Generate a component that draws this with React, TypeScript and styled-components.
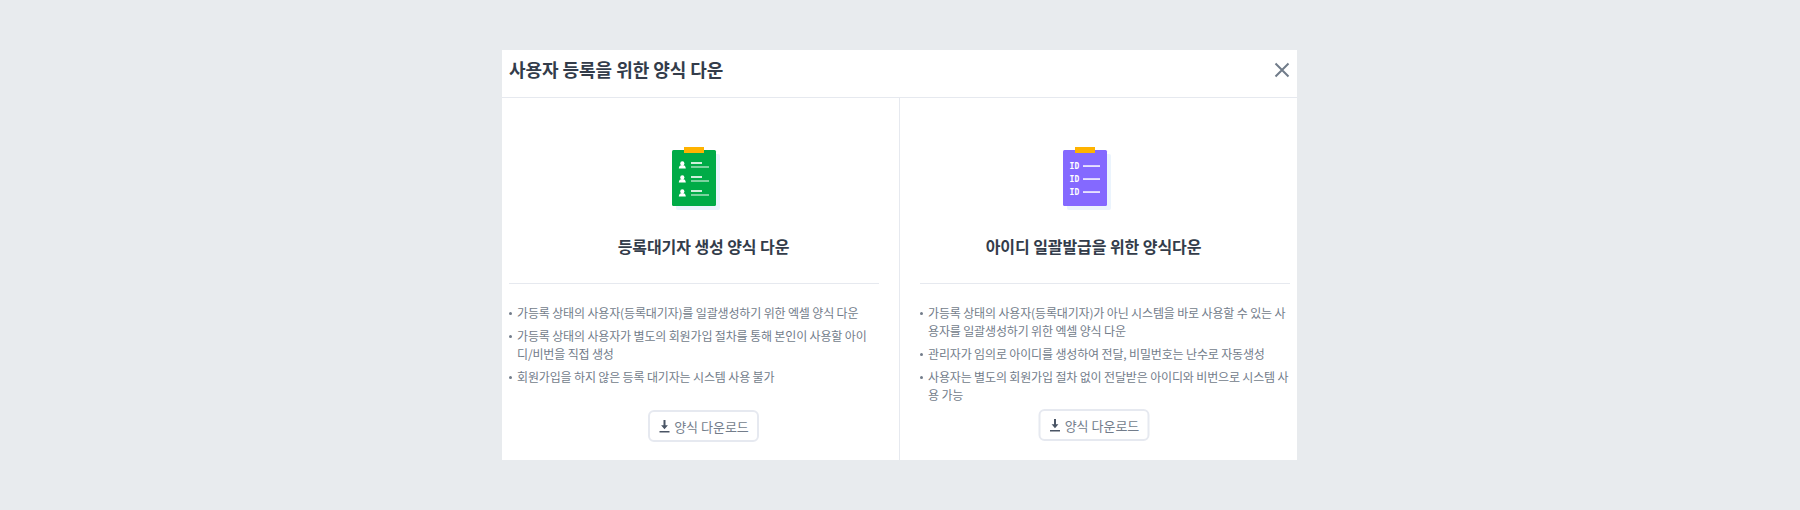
import React from "react";
import styled, { createGlobalStyle } from "styled-components";

const Global = createGlobalStyle`
  html, body { margin: 0; padding: 0; height: 510px; background: #e8ebee; }
  body { font-family: "Noto Sans CJK KR", "Noto Sans", sans-serif; }
  * { box-sizing: border-box; }
`;
const Page = styled.div`
  height: 510px;
  padding-top: 50px;
  display: flex;
  justify-content: center;
  align-items: flex-start;
  padding-left: 4px;
  padding-right: 5px;
  background: #e8ebee;
`;
const Modal = styled.section`
  width: 795px;
  height: 410px;
  background: #fff;
  display: flex;
  flex-direction: column;
`;
const Header = styled.header`
  height: 48px;
  flex: none;
  display: flex;
  align-items: center;
  justify-content: space-between;
  padding: 0 7px 9px 7px;
  border-bottom: 1px solid #e6e9ef;
`;
const Title = styled.h1`
  margin: 0;
  font-size: 18px;
  font-weight: 700;
  line-height: 26px;
  letter-spacing: -0.05px;
  color: #333c4a;
`;
const Close = styled.button`
  border: 0;
  padding: 0;
  margin-top: 2px;
  background: none;
  display: flex;
  color: #717c8a;
`;
const Columns = styled.div`
  flex: 1;
  display: grid;
  grid-template-columns: 398px 397px;
`;
const Column = styled.div<{ $left: boolean }>`
  display: flex;
  flex-direction: column;
  padding: 49px ${(p) => (p.$left ? "20px" : "7px")} 0 ${(p) => (p.$left ? "7px" : "20px")};
  border-right: ${(p) => (p.$left ? "1px solid #e6e9ef" : "0")};
`;
const Intro = styled.div<{ $left: boolean }>`
  display: flex;
  flex-direction: column;
  align-items: center;
  padding: ${(p) => (p.$left ? "0 0 0 19px" : "0 23px 0 0")};
`;
const IconSlot = styled.svg<{ $left: boolean }>`
  display: block;
  margin-left: ${(p) => (p.$left ? "-15px" : "-13px")};
`;
const Heading = styled.h2`
  margin: 23px 0 0;
  font-size: 16px;
  font-weight: 700;
  line-height: 24px;
  letter-spacing: -0.08px;
  color: #333c4a;
`;
const Rule = styled.hr`
  width: 100%;
  height: 1px;
  border: 0;
  margin: 25px 0 20px;
  background: #e6e9ef;
`;
const List = styled.ul<{ $left: boolean }>`
  list-style: none;
  margin: 0;
  padding: 0;
  width: ${(p) => (p.$left ? "368px" : "370px")};
  display: flex;
  flex-direction: column;
  gap: 5px;
`;
const Item = styled.li`
  display: flex;
  gap: 5px;
  font-size: 12px;
  line-height: 18px;
  letter-spacing: -0.15px;
  color: #727c8a;
  word-break: break-all;
`;
const Dot = styled.span`
  flex: none;
  width: 3px;
  height: 3px;
  border-radius: 50%;
  margin: 8px 0 0 0;
  background: #727c8a;
`;
const Download = styled.button<{ $left: boolean; $top: number }>`
  align-self: center;
  margin: ${(p) => p.$top}px 0 0;
  transform: translateX(${(p) => (p.$left ? "9px" : "-11.5px")});
  width: 111px;
  height: 32px;
  padding: 0 0 0 2px;
  border: 2px solid #e6e9f0;
  border-radius: 6px;
  background: #fff;
  display: flex;
  align-items: center;
  justify-content: center;
  gap: 4px;
  font-family: inherit;
  font-size: 13px;
  color: #737d8b;
`;

const Clip = ({ color, left, children }: { color: string; left: boolean; children: React.ReactNode }) => (
  <IconSlot $left={left} width="48" height="64" viewBox="0 0 48 64" aria-hidden="true">
    <rect x="4" y="7" width="44" height="56" rx="2" fill="#ebf4fd" />
    <rect x="0" y="3" width="44" height="56" rx="1.5" fill={color} />
    <rect x="12" y="0" width="20" height="6" fill="#ffb300" />
    {children}
  </IconSlot>
);
const person = (y: number) => (
  <g key={y}>
    <circle cx="10.3" cy={y - 1.6} r="2.1" fill="#fff" />
    <path d={`M6.8 ${y + 3.6}c0-2.6 1.6-3.6 3.5-3.6s3.5 1 3.5 3.6z`} fill="#fff" />
    <rect x="19" y={y - 2.8} width="11" height="1.6" fill="#fff" />
    <rect x="19" y={y + 1.2} width="18" height="1.6" fill="#fff" opacity=".6" />
  </g>
);
const idRow = (y: number) => (
  <g key={y}>
    <text x="6.6" y={y + 3} fontFamily="'DejaVu Sans Mono', monospace" fontWeight="700" fontSize="8" fill="#fff">ID</text>
    <rect x="20" y={y - 0.7} width="17" height="1.5" fill="#fff" />
  </g>
);
const DownIcon = () => (
  <svg width="11" height="13" viewBox="0 0 11 13" aria-hidden="true">
    <path d="M4.5 0h2v5.2h2.4L5.5 9.2 2.1 5.2h2.4z" fill="#4a5565" />
    <rect x="0.5" y="11" width="10" height="1.5" fill="#4a5565" />
  </svg>
);

const left = [
  "가등록 상태의 사용자(등록대기자)를 일괄생성하기 위한 엑셀 양식 다운",
  "가등록 상태의 사용자가 별도의 회원가입 절차를 통해 본인이 사용할 아이디/비번을 직접 생성",
  "회원가입을 하지 않은 등록 대기자는 시스템 사용 불가",
];
const right = [
  "가등록 상태의 사용자(등록대기자)가 아닌 시스템을 바로 사용할 수 있는 사용자를 일괄생성하기 위한 엑셀 양식 다운",
  "관리자가 임의로 아이디를 생성하여 전달, 비밀번호는 난수로 자동생성",
  "사용자는 별도의 회원가입 절차 없이 전달받은 아이디와 비번으로 시스템 사용 가능",
];

const Panel = ({ isLeft, heading, items, top }: { isLeft: boolean; heading: string; items: string[]; top: number }) => (
  <Column $left={isLeft}>
    <Intro $left={isLeft}>
      {isLeft ? (
        <Clip color="#00ab47" left>{[18, 32, 46].map(person)}</Clip>
      ) : (
        <Clip color="#8469ff" left={false}>{[19, 32, 45].map(idRow)}</Clip>
      )}
      <Heading>{heading}</Heading>
    </Intro>
    <Rule />
    <List $left={isLeft}>
      {items.map((t) => (
        <Item key={t}><Dot /><span>{t}</span></Item>
      ))}
    </List>
    <Download $left={isLeft} $top={top}><DownIcon />양식 다운로드</Download>
  </Column>
);

export default function App() {
  return (
    <Page>
      <Global />
      <Modal>
        <Header>
          <Title>사용자 등록을 위한 양식 다운</Title>
          <Close aria-label="닫기">
            <svg width="16" height="16" viewBox="0 0 16 16" aria-hidden="true">
              <path d="M1.5 1.5l13 13M14.5 1.5l-13 13" stroke="currentColor" strokeWidth="2" fill="none" />
            </svg>
          </Close>
        </Header>
        <Columns>
          <Panel isLeft heading="등록대기자 생성 양식 다운" items={left} top={24} />
          <Panel isLeft={false} heading="아이디 일괄발급을 위한 양식다운" items={right} top={5} />
        </Columns>
      </Modal>
    </Page>
  );
}
